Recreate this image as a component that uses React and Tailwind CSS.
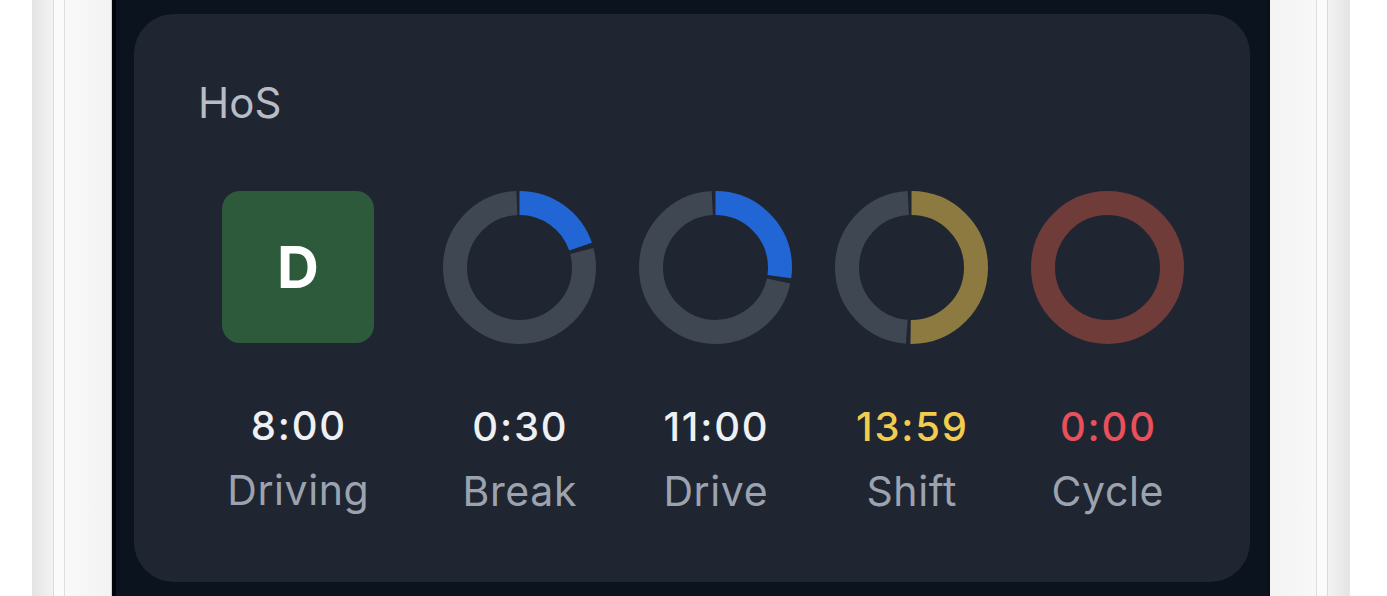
import React from "react";

const R = 64.5;
const C = 2 * Math.PI * R;

// arc from a1 to a2 degrees, clockwise from 12 o'clock
function Arc({ a1, a2, color }) {
  const len = ((a2 - a1) / 360) * C;
  return (
    <circle
      cx="76.5"
      cy="76.5"
      r={R}
      fill="none"
      stroke={color}
      strokeWidth="24"
      strokeDasharray={`${len} ${C}`}
      strokeDashoffset={(-a1 / 360) * C}
      transform="rotate(-90 76.5 76.5)"
    />
  );
}

function Ring({ segs }) {
  return (
    <svg viewBox="0 0 153 153" className="w-[153px] h-[153px]">
      {segs.map((s, i) => (
        <Arc key={i} {...s} />
      ))}
    </svg>
  );
}

const GRAY = "#3f4753";

const items = [
  {
    value: "0:30",
    label: "Break",
    valueColor: "text-[#eef0f3]",
    segs: [
      { a1: 0, a2: 71, color: "#2266d6" },
      { a1: 75, a2: 357, color: GRAY },
    ],
  },
  {
    value: "11:00",
    label: "Drive",
    valueColor: "text-[#eef0f3]",
    segs: [
      { a1: 0, a2: 98, color: "#2266d6" },
      { a1: 102, a2: 356.5, color: GRAY },
    ],
  },
  {
    value: "13:59",
    label: "Shift",
    valueColor: "text-[#f2cc4f]",
    segs: [
      { a1: 0, a2: 180.5, color: "#8c7a40" },
      { a1: 184, a2: 356.5, color: GRAY },
    ],
  },
  {
    value: "0:00",
    label: "Cycle",
    valueColor: "text-[#e8505b]",
    segs: [{ a1: 0, a2: 360, color: "#6f3c39" }],
  },
];

function Caption({ value, label, valueColor }) {
  return (
    <>
      <div className={`mt-[60px] whitespace-nowrap pl-[1.8px] text-[40px] leading-[46px] font-medium tracking-[1.8px] ${valueColor}`}>
        {value}
      </div>
      <div className="mt-[17px] whitespace-nowrap pl-[0.6px] text-[41px] leading-[48px] tracking-[0.6px] text-[#9ca3ae]">
        {label}
      </div>
    </>
  );
}

export default function App() {
  return (
    <div className="flex h-[596px] w-[1387px] overflow-hidden bg-white font-['Inter','Noto_Sans',sans-serif]">
      {/* left frame */}
      <div className="w-[32px] shrink-0 bg-white" />
      <div className="w-[21px] shrink-0 bg-gradient-to-r from-[#e4e4e4] to-[#f3f3f3]" />
      <div className="w-[1px] shrink-0 bg-[#dadada]" />
      <div className="w-[10px] shrink-0 bg-[#fbfbfb]" />
      <div className="w-[1px] shrink-0 bg-[#dedede]" />
      <div className="w-[46px] shrink-0 bg-gradient-to-r from-[#f9f9f9] to-[#f3f3f3]" />
      <div className="w-[1px] shrink-0 bg-[#d0d0d0]" />
      <div className="w-[4px] shrink-0 bg-[#030608]" />

      {/* screen */}
      <div className="flex w-[1152px] shrink-0 flex-col bg-[#0b141e] px-[18px] pt-[14px]">
        <div className="h-[568px] rounded-[40px] bg-[#1f2632] px-[64px] pt-[64px]">
          <div className="text-[42px] leading-[50px] text-[#b8bcc4]">HoS</div>

          <div className="mt-[63px] flex">
            <div className="ml-[24px] mr-[69px] flex w-[152px] flex-col items-center">
              <div className="flex h-[152px] w-[152px] items-center justify-center rounded-[18px] bg-[#2c5a3a] text-[58px] font-bold text-white">
                D
              </div>
              <Caption value="8:00" label="Driving" valueColor="text-[#eef0f3]" />
            </div>
            <div className="flex gap-[43px]">
              {items.map((it) => (
                <div key={it.label} className="flex w-[153px] flex-col items-center">
                  <Ring segs={it.segs} />
                  <Caption {...it} />
                </div>
              ))}
            </div>
          </div>
        </div>
      </div>

      {/* right frame */}
      <div className="w-[2px] shrink-0 bg-[#0a0f14]" />
      <div className="w-[46px] shrink-0 bg-gradient-to-r from-[#f3f3f3] to-[#f8f8f8]" />
      <div className="w-[1px] shrink-0 bg-[#dedede]" />
      <div className="w-[10px] shrink-0 bg-[#fbfbfb]" />
      <div className="w-[1px] shrink-0 bg-[#dadada]" />
      <div className="w-[22px] shrink-0 bg-gradient-to-r from-[#f3f3f3] to-[#e4e4e4]" />
      <div className="flex-1 bg-white" />
    </div>
  );
}
